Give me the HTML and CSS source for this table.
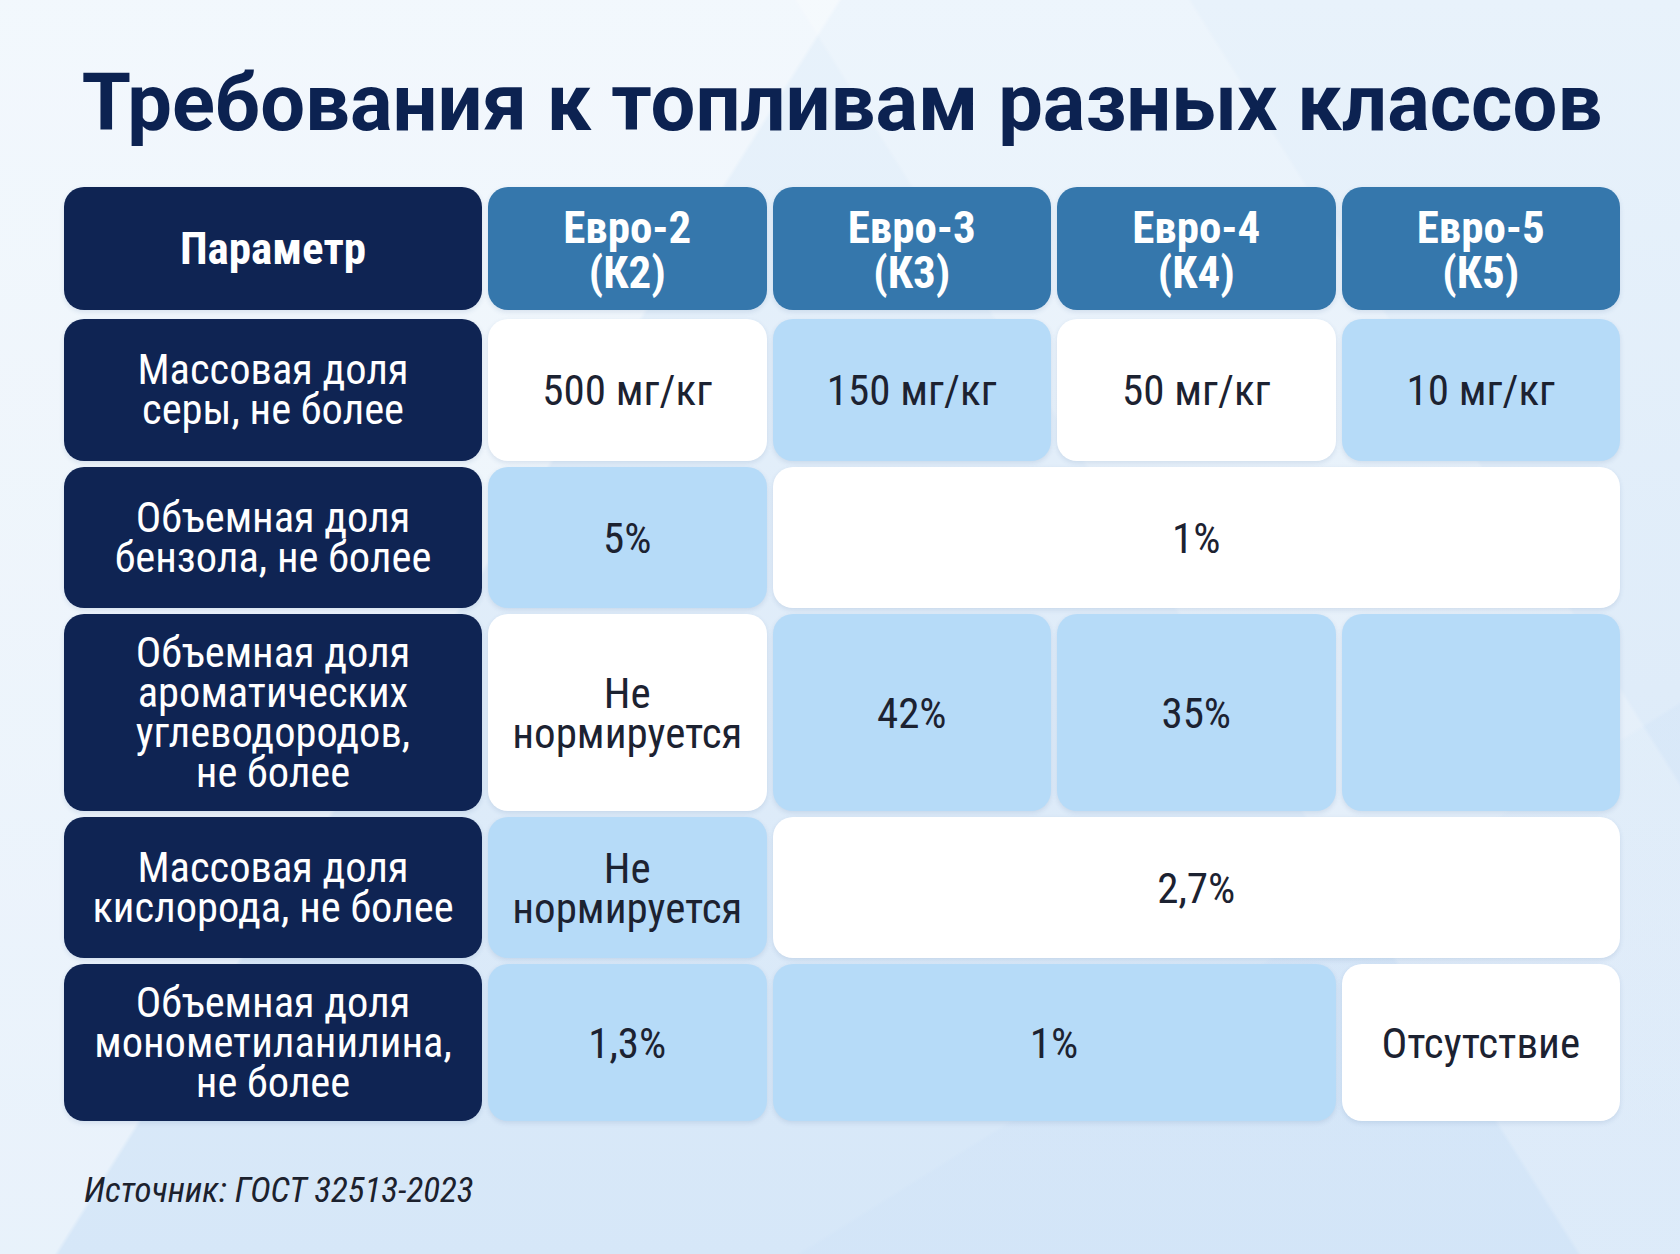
FILE: index.html
```html
<!DOCTYPE html>
<html lang="ru">
<head>
<meta charset="utf-8">
<title>Требования к топливам разных классов</title>
<link rel="stylesheet" href="styles.css">
</head>
<body>
<div class="page">
  <h1 class="title">Требования к топливам разных классов</h1>
  <div class="table">
    <div class="thead">
      <div class="cell param head-param">Параметр</div>
      <div class="cell head">Евро-2
(К2)</div>
      <div class="cell head">Евро-3
(К3)</div>
      <div class="cell head">Евро-4
(К4)</div>
      <div class="cell head">Евро-5
(К5)</div>
    </div>
    <div class="tbody">
      <div class="cell param">Массовая доля
серы, не более</div>
      <div class="cell val white">500 мг/кг</div>
      <div class="cell val light">150 мг/кг</div>
      <div class="cell val white">50 мг/кг</div>
      <div class="cell val light">10 мг/кг</div>

      <div class="cell param">Объемная доля
бензола, не более</div>
      <div class="cell val light">5%</div>
      <div class="cell val white span3">1%</div>

      <div class="cell param">Объемная доля
ароматических
углеводородов,
не более</div>
      <div class="cell val white">Не
нормируется</div>
      <div class="cell val light">42%</div>
      <div class="cell val light">35%</div>
      <div class="cell val light"></div>

      <div class="cell param">Массовая доля
кислорода, не более</div>
      <div class="cell val light">Не
нормируется</div>
      <div class="cell val white span3">2,7%</div>

      <div class="cell param">Объемная доля
монометиланилина,
не более</div>
      <div class="cell val light">1,3%</div>
      <div class="cell val light span2">1%</div>
      <div class="cell val white">Отсутствие</div>
    </div>
  </div>
  <p class="source">Источник: ГОСТ 32513-2023</p>
</div>
</body>
</html>
```

FILE: styles.css
```css
html, body {
  margin: 0;
  padding: 0;
}

body {
  width: 1680px;
  height: 1254px;
  overflow: hidden;
  font-family: "Roboto Condensed", Roboto, "Noto Sans", "Liberation Sans", sans-serif;
  background-color: #e1edf9;
  background-image:
    linear-gradient(122deg, rgba(255,255,255,0.45) 0 34%, rgba(255,255,255,0) 34.2%),
    linear-gradient(58deg, rgba(255,255,255,0) 0 64%, rgba(255,255,255,0.22) 64.2% 80%, rgba(255,255,255,0) 80.2%),
    linear-gradient(148deg, rgba(255,255,255,0) 0 76%, rgba(205,225,247,0.3) 76.2%),
    linear-gradient(180deg, #e8f2fb 0%, #dfecf9 55%, #d6e7f8 100%);
}

.page {
  padding: 63px 60px 0 64px;
}

.title {
  margin: 0 0 44px 0;
  font-family: Roboto, "Noto Sans", "Liberation Sans", sans-serif;
  font-weight: 700;
  font-size: 79.5px;
  line-height: 80px;
  color: #0c2251;
  text-align: center;
  width: 1556px;
  white-space: nowrap;
}

.table {
  width: 1556px;
  display: flex;
  flex-direction: column;
  gap: 9px;
}

.thead,
.tbody {
  display: grid;
  grid-template-columns: 418px repeat(4, 1fr);
  column-gap: 6px;
}

.thead {
  grid-template-rows: 123px;
}

.tbody {
  grid-template-rows: 142px 141px 197px 141px 157px;
  row-gap: 6px;
}

.cell {
  display: flex;
  align-items: center;
  justify-content: center;
  text-align: center;
  white-space: pre-line;
  border-radius: 20px;
  box-shadow: 0 2px 5px rgba(30, 70, 130, 0.12);
}

.param {
  background: #0f2453;
  color: #ffffff;
  font-size: 42.5px;
  line-height: 40px;
}

.head-param {
  font-weight: 700;
  font-size: 45px;
}

.head {
  background: #3577ac;
  color: #ffffff;
  font-weight: 700;
  font-size: 45px;
  line-height: 45px;
  padding-top: 2px;
}

.val {
  color: #1c2231;
  font-size: 43px;
  line-height: 40px;
}

.white {
  background: #ffffff;
}

.light {
  background: #b6dbf8;
}

.span2 {
  grid-column: span 2;
}

.span3 {
  grid-column: span 3;
}

.source {
  margin: 52px 0 0 20px;
  font-style: italic;
  font-size: 35px;
  line-height: 35px;
  color: #1c212d;
}
```
